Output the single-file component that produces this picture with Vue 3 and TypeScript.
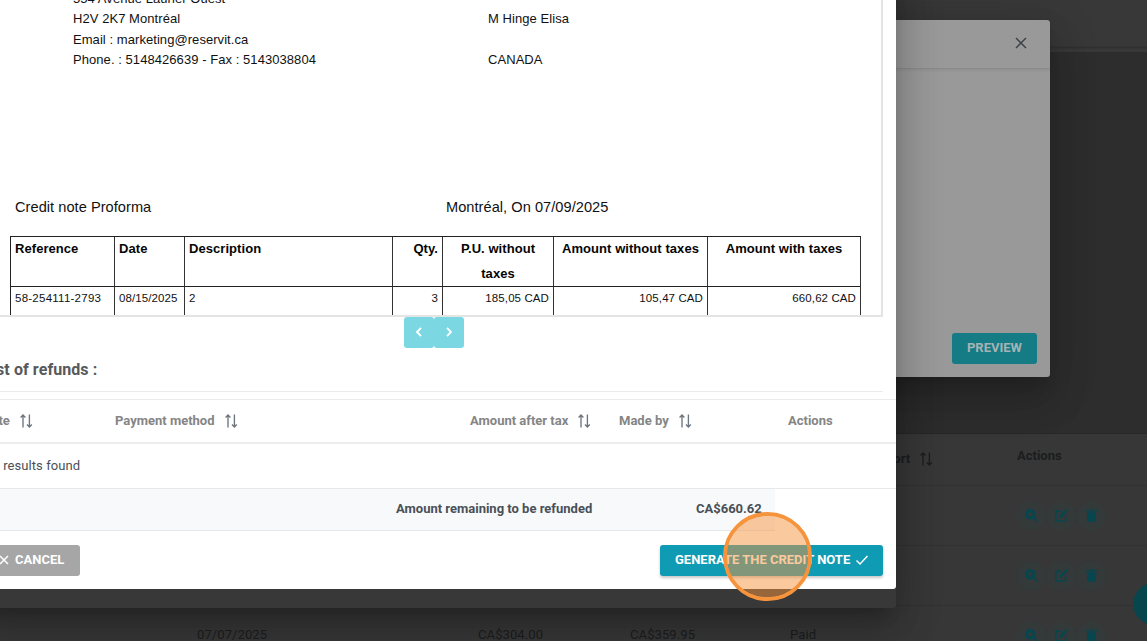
<script setup lang="ts">
interface Reservation {
  id: number
  date: string
  amount: string
  total: string
  status: string
}

const reservations: Reservation[] = [
  { id: 1, date: '', amount: '', total: '', status: '' },
  { id: 2, date: '', amount: '', total: '', status: '' },
  { id: 3, date: '07/07/2025', amount: 'CA$304.00', total: 'CA$359.95', status: 'Paid' },
]

const hotelLines: string[] = [
  '554 Avenue Laurier Ouest',
  'H2V 2K7 Montréal',
  'Email : marketing@reservit.ca',
  'Phone. : 5148426639 - Fax : 5143038804',
]
const clientLines: string[] = ['', 'M Hinge Elisa', '', 'CANADA']

const heads: string[] = ['Reference', 'Date', 'Description', 'Qty.', 'P.U. without taxes', 'Amount without taxes', 'Amount with taxes']
const cells: string[] = ['58-254111-2793', '08/15/2025', '2', '3', '185,05 CAD', '105,47 CAD', '660,62 CAD']

const sortPath = 'M4 13.500V1M1.600 3.400L4 1l2.400 2.400M10.400 .5V13M8 10.600l2.400 2.400 2.400-2.400'
</script>

<template>
  <div class="screen">
    <div class="page">
      <div class="topbar"></div>
      <div class="void"></div>
      <section class="list">
        <header class="list-head">
          <span class="export">port
            <svg class="sort" viewBox="0 0 14 14"><path :d="sortPath" /></svg>
          </span>
          <span class="list-actions">Actions</span>
        </header>
        <div v-for="r in reservations" :key="r.id" class="list-row">
          <span class="c-date">{{ r.date }}</span>
          <span class="c-amount">{{ r.amount }}</span>
          <span class="c-total">{{ r.total }}</span>
          <span class="c-status">{{ r.status }}</span>
          <div class="row-actions">
            <i class="round"><svg viewBox="0 0 512 512"><path d="M416 208c0 45.900-14.900 88.300-40 122.700L502.600 457.400c12.500 12.500 12.500 32.800 0 45.300s-32.800 12.500-45.300 0L330.700 376c-34.400 25.200-76.800 40-122.700 40C93.100 416 0 322.900 0 208S93.100 0 208 0S416 93.100 416 208zM184 296c0 13.300 10.700 24 24 24s24-10.700 24-24V232h64c13.300 0 24-10.700 24-24s-10.700-24-24-24H232V120c0-13.300-10.700-24-24-24s-24 10.700-24 24v64H120c-13.300 0-24 10.700-24 24s10.700 24 24 24h64v64z" /></svg></i>
            <i class="round"><svg viewBox="0 0 14 14"><path d="M6.200 2.500H2.200A1.200 1.200 0 0 0 1 3.700v8.100A1.200 1.200 0 0 0 2.200 13h8.100a1.200 1.200 0 0 0 1.200-1.200V8" fill="none" stroke="currentColor" stroke-width="1.700" stroke-linecap="round" /><path d="M10.200 1.800l2.100 2.100-5 5-2.800.7.700-2.800zM10.900 1.100l.7-.7c.4-.4 1-.4 1.400 0l.7.700c.4.400.4 1 0 1.400l-.7.700z" /></svg></i>
            <i class="round"><svg viewBox="0 0 14 14"><path d="M1 1.300h3.600L5.200.3h3.600l.6 1H13v1.500H1zM1.900 3.600h10.200l-.6 8.900c0 .7-.6 1.200-1.300 1.200H3.800c-.7 0-1.300-.5-1.300-1.200z" /></svg></i>
          </div>
        </div>
      </section>
      <div class="fab"></div>
    </div>

    <div class="preview-dialog">
      <header class="preview-head">
        <svg class="close" viewBox="0 0 12 12"><path d="M1 1l10 10M11 1L1 11" /></svg>
      </header>
      <button class="preview-btn">PREVIEW</button>
    </div>

    <div class="dialog-shell"></div>

    <div class="credit-dialog">
      <div class="viewer">
        <div class="parties">
          <div><p v-for="(l, i) in hotelLines" :key="i">{{ l }}</p></div>
          <div><p v-for="(l, i) in clientLines" :key="i">{{ l }}</p></div>
        </div>
        <div class="doc-title"><span>Credit note Proforma</span><span>Montréal, On 07/09/2025</span></div>
        <div class="doc-table">
          <div v-for="h in heads" :key="h" class="th"><span>{{ h }}</span></div>
          <div v-for="(c, i) in cells" :key="i" class="td">{{ c }}</div>
        </div>
      </div>
      <div class="pager">
        <button><svg viewBox="0 0 8 12"><path d="M6 1.900L2 6l4 4.100" /></svg></button>
        <button><svg viewBox="0 0 8 12"><path d="M2 1.900L6 6l-4 4.100" /></svg></button>
      </div>
      <h2><span>List of refunds :</span></h2>
      <div class="refund-head">
        <span class="r-date"><b>Date</b><svg class="sort" viewBox="0 0 14 14"><path :d="sortPath" /></svg></span>
        <span class="r-method"><b>Payment method</b><svg class="sort" viewBox="0 0 14 14"><path :d="sortPath" /></svg></span>
        <span class="r-amount"><b>Amount after tax</b><svg class="sort" viewBox="0 0 14 14"><path :d="sortPath" /></svg></span>
        <span class="r-made"><b>Made by</b><svg class="sort" viewBox="0 0 14 14"><path :d="sortPath" /></svg></span>
        <span class="r-actions"><b>Actions</b></span>
      </div>
      <div class="empty"><span>No results found</span></div>
      <div class="remain"><div class="remain-fill"><span>Amount remaining to be refunded</span><span>CA$660.62</span></div></div>
      <footer>
        <button class="cancel"><svg viewBox="0 0 12 12"><path d="M2 2l8 8M10 2L2 10" /></svg><span>CANCEL</span></button>
        <button class="generate"><span>GENERATE THE CREDIT NOTE</span><svg viewBox="0 0 14 12"><path d="M1.500 6.500L5 10l7.500-8" /></svg></button>
      </footer>
    </div>

    <div class="pointer"></div>
  </div>
</template>

<style>
body { margin: 0; overflow: hidden; }
</style>

<style scoped>
* { box-sizing: border-box; }
p, h2 { margin: 0; }
button { border: 0; padding: 0; font-family: inherit; }
.screen { position: relative; width: 1147px; height: 641px; overflow: hidden; background: #2d2d2d; font-family: Roboto, sans-serif; font-size: 13px; color: #495057; }
.sort { width: 14px; height: 14px; fill: none; stroke: #6c757d; stroke-width: 1.35; flex: none; }

.page { display: flex; flex-direction: column; height: 641px; color: #1b1d1e; }
.topbar { height: 52px; background: linear-gradient(#383838 46px, #303030 47px, #303030 48px, #383838 49px); flex: none; }
.void { height: 381px; flex: none; }
.list { flex: none; height: 240px; background: #373737; border-top: 1px solid #272727; }
.list-head { display: flex; height: 51px; padding: 0 0 2px 886px; font-weight: 700; align-items: center; }
.list-head .sort { stroke: #1b1d1e; }
.export { display: flex; align-items: center; gap: 9px; width: 131px; }
.list-actions { margin-top: -7px; }
.list-row { display: grid; grid-template-columns: 197px 281px 152px 160px 226px 1fr; height: 60px; border-top: 1px solid #303232; align-items: center; }
.list-row > span { letter-spacing: .1px; margin-top: -2px; white-space: nowrap; }
.c-date { grid-column: 2; }
.c-amount { grid-column: 3; }
.c-total { grid-column: 4; }
.c-status { grid-column: 5; }
.row-actions { grid-column: 6; display: flex; }
.round { width: 30px; height: 30px; border-radius: 50%; background: #34393a; display: grid; place-items: center; color: #06474f; padding-left: 1px; }
.round svg { width: 13px; height: 13px; fill: currentColor; overflow: visible; }
.fab { position: absolute; left: 1133px; top: 583px; width: 42px; height: 42px; border-radius: 50%; background: #07464d; }

.preview-dialog { position: absolute; left: 400px; top: 20px; width: 650px; height: 357px; border-radius: 3px; background: #999; box-shadow: 0 11px 15px -7px rgba(0,0,0,.15), 0 24px 38px 3px rgba(0,0,0,.14), 0 9px 46px 8px rgba(0,0,0,.1); display: flex; flex-direction: column; justify-content: space-between; align-items: flex-end; }
.preview-head { width: 100%; height: 49px; border-bottom: 1px solid #8b8b8b; box-shadow: 0 1px 3px rgba(0,0,0,.08); display: flex; justify-content: flex-end; padding: 17px 23px; }
.close { width: 12px; height: 12px; fill: none; stroke: #3b3e42; stroke-width: 1.4; }
.preview-btn { width: 85px; height: 31px; margin: 0 13px 13px 0; padding-bottom: 2px; border-radius: 3px; background: #157b85; color: #a5b3b5; font-size: 13px; font-weight: 700; }

.dialog-shell { position: absolute; left: -20px; top: -40px; width: 916px; height: 648px; background: #383838; border-radius: 3px; box-shadow: 0 11px 15px -7px rgba(0,0,0,.2), 0 24px 38px 3px rgba(0,0,0,.14), 0 9px 46px 8px rgba(0,0,0,.12); }
.credit-dialog { position: absolute; left: 0; top: 0; width: 896px; height: 589px; background: #fff; border-bottom-right-radius: 3px; }

.viewer { width: 883px; height: 317px; border: solid #e4e4e4; border-width: 0 2px 2px 0; overflow: hidden; font-family: "Liberation Sans", Arial, sans-serif; color: #111; }
.parties { display: grid; grid-template-columns: 415px 1fr; margin-left: 73px; height: 196px; font-size: 13px; letter-spacing: .06px; }
.parties > div { margin-top: -11px; }
.parties p { height: 20.400px; line-height: 20.400px; white-space: pre; }
.doc-title { display: grid; grid-template-columns: 431px 1fr; margin-left: 15px; height: 40px; line-height: 22px; font-size: 14.600px; letter-spacing: .04px; }
.doc-table { display: grid; grid-template-columns: 104px 70px 208px 50px 111px 154px 153px; grid-template-rows: 50px 60px; width: 851px; margin-left: 10px; border-top: 1px solid #222; border-left: 1px solid #222; }
.th, .td { border-right: 1px solid #333; border-bottom: 1px solid #222; padding: 0 4px; }
.th { font-size: 13px; font-weight: 700; line-height: 25px; letter-spacing: .06px; color: #050505; }
.th span { position: relative; top: -1px; }
.th:nth-child(n+5) { text-align: center; }
.th:nth-child(4), .td:nth-child(n+11) { text-align: right; }
.td { font-size: 11.500px; line-height: 22px; white-space: nowrap; letter-spacing: .1px; }
.td:nth-child(8) { letter-spacing: .25px; }

.pager { display: flex; margin-left: 404px; height: 31px; }
.pager button { width: 30px; height: 31px; padding-bottom: 2px; border-radius: 3px; background: #7bd8e2; display: grid; place-items: center; }
.pager svg { width: 8px; height: 12px; fill: none; stroke: #fff; stroke-width: 1.800; }
h2 { width: 883px; height: 44px; line-height: 43px; border-bottom: 1px solid #ebebeb; font-size: 16px; font-weight: 700; color: #58595b; overflow: hidden; }
h2 span { display: block; white-space: nowrap; letter-spacing: .08px; margin-left: -17px; }
.refund-head { margin-top: 7px; height: 45px; padding-bottom: 1px; border-top: 1px solid #ebebeb; border-bottom: 2px solid #ececec; display: flex; align-items: center; color: #858585; }
.refund-head > span { display: flex; align-items: center; gap: 9px; flex: none; white-space: nowrap; }
.refund-head b { font-weight: 700; margin-top: -1px; }
.r-date { width: 132px; margin-left: -17px; }
.r-method { width: 355px; }
.r-amount { width: 149px; }
.r-made { width: 169px; }
.empty { height: 44px; line-height: 43px; overflow: hidden; }
.empty span { display: block; margin-left: -17px; letter-spacing: .08px; }
.remain { height: 43px; border-top: 1px solid #e7e8ea; }
.remain-fill { width: 775px; height: 42px; padding-left: 396px; display: grid; grid-template-columns: 300px 1fr; background: #f8f9fa; border-bottom: 1px solid #e6e8ea; line-height: 40px; font-weight: 700; white-space: nowrap; }
footer { display: flex; justify-content: space-between; padding: 14px 13px 0 0; }
footer button { height: 31px; display: flex; align-items: center; border-radius: 3px; color: #fff; font-size: 13px; font-weight: 700; white-space: nowrap; }
footer button span { margin-top: -2px; }
footer svg { fill: none; stroke: #fff; stroke-width: 1.500; flex: none; margin-top: -1px; }
.cancel { width: 100px; margin-left: -20px; padding-left: 18px; gap: 5px; background: #a6a6a6; }
.cancel svg { width: 12px; height: 12px; }
.generate { width: 223px; padding-left: 15px; gap: 5px; background: #0f9bb4; box-shadow: 0 2px 3px rgba(0,0,0,.22); }
.generate svg { width: 14px; height: 12px; }

.pointer { position: absolute; left: 723px; top: 512px; width: 89px; height: 89px; border-radius: 50%; border: 4px solid #f6943e; background: rgba(246,148,62,.5); background-clip: padding-box; }
</style>
